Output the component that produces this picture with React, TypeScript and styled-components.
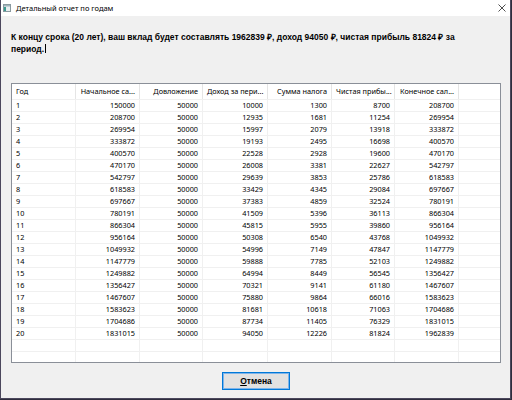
import styled, { createGlobalStyle } from 'styled-components'

const GlobalStyle = createGlobalStyle`
  html, body {
    margin: 0;
    padding: 0;
    background: #2f2d3d;
  }
  #root {
    width: 512px;
    height: 400px;
    overflow: hidden;
  }
`

const rows: number[][] = [
  [1, 150000, 50000, 10000, 1300, 8700, 208700],
  [2, 208700, 50000, 12935, 1681, 11254, 269954],
  [3, 269954, 50000, 15997, 2079, 13918, 333872],
  [4, 333872, 50000, 19193, 2495, 16698, 400570],
  [5, 400570, 50000, 22528, 2928, 19600, 470170],
  [6, 470170, 50000, 26008, 3381, 22627, 542797],
  [7, 542797, 50000, 29639, 3853, 25786, 618583],
  [8, 618583, 50000, 33429, 4345, 29084, 697667],
  [9, 697667, 50000, 37383, 4859, 32524, 780191],
  [10, 780191, 50000, 41509, 5396, 36113, 866304],
  [11, 866304, 50000, 45815, 5955, 39860, 956164],
  [12, 956164, 50000, 50308, 6540, 43768, 1049932],
  [13, 1049932, 50000, 54996, 7149, 47847, 1147779],
  [14, 1147779, 50000, 59888, 7785, 52103, 1249882],
  [15, 1249882, 50000, 64994, 8449, 56545, 1356427],
  [16, 1356427, 50000, 70321, 9141, 61180, 1467607],
  [17, 1467607, 50000, 75880, 9864, 66016, 1583623],
  [18, 1583623, 50000, 81681, 10618, 71063, 1704686],
  [19, 1704686, 50000, 87734, 11405, 76329, 1831015],
  [20, 1831015, 50000, 94050, 12226, 81824, 1962839],
]

const headers = [
  'Год',
  'Начальное са...',
  'Довложение',
  'Доход за пери...',
  'Сумма налога',
  'Чистая прибы...',
  'Конечное сал...',
]

const Window = styled.div`
  box-sizing: border-box;
  width: 511px;
  height: 399px;
  background: #f0f0f0;
  border: 1px solid #4b475c;
  border-top: none;
  display: flex;
  flex-direction: column;
  font-family: 'Noto Sans', 'Segoe UI', sans-serif;
  color: #000;
`

const TitleBar = styled.div`
  height: 16px;
  flex: none;
  background: #fff;
  display: flex;
  align-items: center;
  gap: 5px;
  padding: 0 4px 0 2px;
`

const Title = styled.span`
  font-size: 7.5px;
  line-height: 16px;
  color: #000;
`

const Close = styled.span`
  margin-left: auto;
  display: flex;
  align-items: center;
`

const Body = styled.div`
  flex: 1;
  display: flex;
  flex-direction: column;
  padding: 15px 9px 0 10px;
`

const Message = styled.div`
  font-family: 'Liberation Sans', Arial, sans-serif;
  font-weight: bold;
  font-size: 8.5px;
  line-height: 12px;
  white-space: nowrap;
`

const Caret = styled.span`
  display: inline-block;
  width: 1px;
  height: 9px;
  background: #000;
  vertical-align: -1px;
  margin-left: 1px;
`

const Table = styled.div`
  box-sizing: border-box;
  margin-top: 28px;
  width: 490px;
  height: 280px;
  background: #fff;
  border: 1px solid #8a8f98;
  overflow: hidden;
  font-size: 7.3px;
`

const Row = styled.div<{ $head?: boolean }>`
  display: grid;
  grid-template-columns: 64px 64px 63px 65px 64px 63px 64px 1fr;
  height: ${p => (p.$head ? 16 : 12)}px;
  box-sizing: border-box;
  border-bottom: 1px solid #f0f0f0;
`

const Cell = styled.div<{ $left?: boolean; $head?: boolean }>`
  box-sizing: border-box;
  border-right: 1px solid ${p => (p.$head ? '#e5e5e5' : '#f0f0f0')};
  padding: 0 4px;
  text-align: ${p => (p.$left ? 'left' : 'right')};
  line-height: ${p => (p.$head ? 15 : 11)}px;
  white-space: nowrap;
  overflow: hidden;

  &:last-child {
    border-right: none;
  }
`

const Footer = styled.div`
  display: flex;
  justify-content: center;
  margin-top: 9px;
`

const Button = styled.button`
  box-sizing: border-box;
  width: 68px;
  height: 18px;
  padding: 0;
  background: #e1e1e1;
  border: 1px solid #0078d7;
  box-shadow: inset 0 0 0 1px #7eb4ea;
  font-family: 'Liberation Sans', Arial, sans-serif;
  font-weight: bold;
  font-size: 8.5px;
  color: #000;
  u {
    text-decoration-thickness: 1px;
    text-underline-offset: 1px;
  }
`

function AppIcon() {
  return (
    <svg width="8" height="8" viewBox="0 0 8 8">
      <rect x="0.5" y="0.5" width="7" height="7" fill="#e8eef0" stroke="#8a9aa0" />
      <rect x="1" y="1" width="6" height="1.5" fill="#9fb4bb" />
      <rect x="1" y="3" width="2" height="4" fill="#3a9a8f" />
    </svg>
  )
}

function CloseIcon() {
  return (
    <svg width="8" height="8" viewBox="0 0 8 8">
      <path d="M0.5 0.5 L7.5 7.5 M7.5 0.5 L0.5 7.5" stroke="#222" strokeWidth="0.8" />
    </svg>
  )
}

export default function App() {
  const empty = [0, 1]
  return (
    <>
      <GlobalStyle />
      <Window>
        <TitleBar>
          <AppIcon />
          <Title>Детальный отчет по годам</Title>
          <Close>
            <CloseIcon />
          </Close>
        </TitleBar>
        <Body>
          <Message>
            К концу срока (20 лет), ваш вклад будет составлять 1962839 ₽, доход 94050 ₽, чистая прибыль 81824 ₽ за
            <br />
            период.
            <Caret />
          </Message>
          <Table>
            <Row $head>
              {headers.map((h, i) => (
                <Cell key={h} $head $left={i === 0}>
                  {h}
                </Cell>
              ))}
              <Cell $head />
            </Row>
            {rows.map(r => (
              <Row key={r[0]}>
                {r.map((v, i) => (
                  <Cell key={i} $left={i === 0}>
                    {v}
                  </Cell>
                ))}
                <Cell />
              </Row>
            ))}
            {empty.map(e => (
              <Row key={'e' + e}>
                {headers.map((_, i) => (
                  <Cell key={i} />
                ))}
                <Cell />
              </Row>
            ))}
          </Table>
          <Footer>
            <Button>
              <u>О</u>тмена
            </Button>
          </Footer>
        </Body>
      </Window>
    </>
  )
}
